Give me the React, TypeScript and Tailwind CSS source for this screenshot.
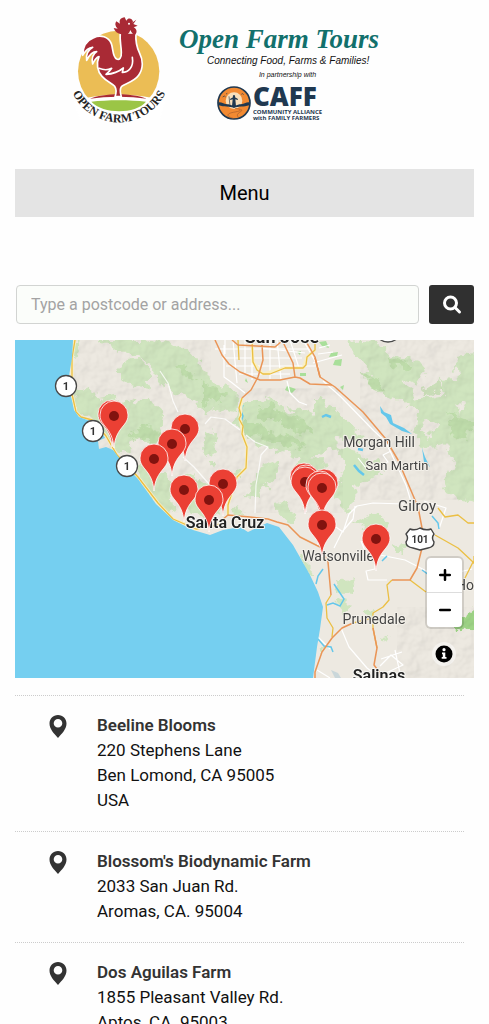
const pins = [
    { x: 97, y: 75 },
    { x: 99, y: 76 },
    { x: 170, y: 89 },
    { x: 157, y: 104 },
    { x: 139, y: 119 },
    { x: 208, y: 144 },
    { x: 169, y: 150 },
    { x: 194, y: 160 },
    { x: 289, y: 138 },
    { x: 291, y: 140 },
    { x: 290, y: 142 },
    { x: 309, y: 144 },
    { x: 305, y: 146 },
    { x: 307, y: 148 },
    { x: 307, y: 185 },
    { x: 361, y: 199 },
];

const shields = [
    { x: 51, y: 46 },
    { x: 78, y: 91 },
    { x: 112, y: 126 },
];

const places = [
    { name: "Morgan Hill", x: 364, y: 107, size: 14 },
    { name: "San Martin", x: 382, y: 130, size: 13 },
    { name: "Gilroy", x: 402, y: 171, size: 15 },
    { name: "Watsonville", x: 323, y: 221, size: 14 },
    { name: "Prunedale", x: 359, y: 284, size: 14 },
    { name: "Hollister", x: 467, y: 250, size: 14 },
];

const cities = [
    { name: "San Jose", x: 267, y: 3, size: 18 },
    { name: "Santa Cruz", x: 210, y: 188, size: 16 },
    { name: "Salinas", x: 364, y: 341, size: 16 },
];

const farms = [
    { name: "Beeline Blooms", lines: ["220 Stephens Lane", "Ben Lomond, CA 95005", "USA"] },
    { name: "Blossom's Biodynamic Farm", lines: ["2033 San Juan Rd.", "Aromas, CA. 95004"] },
    { name: "Dos Aguilas Farm", lines: ["1855 Pleasant Valley Rd.", "Aptos, CA. 95003"] },
];

function RoosterLogo() {
    return (
        <svg viewBox="27 30 306 330" className="w-[102px] h-[110px] shrink-0 overflow-visible" aria-hidden="true">
            <circle cx="176" cy="199" r="122" fill="#ebbd55" />
            <path d="M40 290C110 262 245 262 315 290L300 345H60Z" fill="#fff" />
            <path d="M94 290C140 284 212 284 258 290C226 328 130 328 94 290Z" fill="#9bc546" />
            <path d="M90 281C130 263 220 263 260 281C210 273 140 273 90 281Z" fill="#a92a35" />
            {/* Body, neck and tail */}
            <path
                d="M181 84C178 106 184 122 184 142C185 158 178 166 170 162C157 155 160 132 154 116C146 95 121 88 101 98C80 106 68 124 68 151C76 137 86 128 98 127C83 136 77 148 80 166C88 150 98 140 110 140C98 148 94 160 98 177C104 164 109 157 117 155C108 176 112 199 126 214C139 229 158 236 164 244C170 253 169 264 165 275H184C180 263 179 252 185 244C196 236 223 230 236 211C251 190 249 164 239 145C230 127 226 109 228 84Z"
                fill="#a92a35"
                stroke="#fff"
                strokeWidth="5"
                strokeLinejoin="round"
            />
            <path
                d="M184 88C173 86 164 79 161 69L173 71C165 64 164 55 169 49L180 56C176 46 182 38 194 37L199 47C205 37 216 40 219 50L215 54L229 44L220 57L233 62L221 67C232 72 232 84 224 91C216 86 213 79 211 75C207 88 197 95 184 88Z"
                fill="#a92a35"
            />
            <circle cx="207" cy="56" r="3" fill="#fff" />
            <path
                d="M117 190C134 197 149 193 155 190C149 199 144 203 138 208C157 207 177 200 190 189L187 202C204 202 222 188 217 157"
                fill="none"
                stroke="#fff"
                strokeWidth="5"
                strokeLinecap="round"
                strokeLinejoin="round"
            />
            <path id="logo-arc" d="M23 198A154 154 0 0 0 331 198" fill="none" />
            <text fill="#242424" className="font-['Liberation_Serif'] font-bold text-[36px]" textAnchor="middle">
                <textPath href="#logo-arc" startOffset="50%">
                    OPEN FARM TOURS
                </textPath>
            </text>
        </svg>
    );
}

function CaffLogo() {
    return (
        <svg viewBox="0 0 102 102" className="w-[34px] h-[34px] shrink-0" aria-hidden="true">
            <circle cx="51" cy="51" r="48" fill="#f28a32" stroke="#1f3850" strokeWidth="5" />
            <circle cx="51" cy="44" r="25" fill="#f8dfba" />
            <path d="M4 49C14 47 22 56 34 55L51 60L68 55C80 56 88 47 98 49L97 58C79 64 65 60 51 66C36 60 22 64 5 58Z" fill="#1f3850" />
            <path d="M45 61L47 40L40 42L39 39L48 34C45 25 57 25 54 34L63 39L62 42L55 40L57 61Z" fill="#1f3850" />
            <path d="M36 31L39 60M17 33L22 30L26 33M27 24L31 22M73 25L77 23L80 26" stroke="#1f3850" strokeWidth="2" fill="none" />
            <path d="M54 67C75 69 77 74 54 78C27 82 27 91 49 97M71 70C86 76 49 80 65 95" fill="none" stroke="#a65c2b" strokeWidth="2" />
        </svg>
    );
}

function FarmMap() {
    return (
        <svg
            viewBox="0 0 459 338"
            preserveAspectRatio="xMidYMid slice"
            className="block w-full h-full font-[Roboto,sans-serif]"
            role="img"
            aria-label="Map of farms"
        >
            <defs>
                <clipPath id="land">
                    <path d="M58 0L57 18L54 36L55 52L59 70L64 77L75 81L86 91L90 98L83 101L84 109L91 107L98 110L108 123L123 139L141 164L158 180L178 190L195 195L208 190L225 187L233 192L252 183L264 187L278 205L295 235L303 252L308 267L305 289L302 307L298 338H459V0Z" />
                </clipPath>
                {/* Hill shading */}
                <filter id="relief" x="0" y="0" width="100%" height="100%">
                    <feTurbulence type="fractalNoise" baseFrequency="0.06" numOctaves="3" seed="8" />
                    <feDiffuseLighting surfaceScale="4" lightingColor="#ffffff">
                        <feDistantLight azimuth="225" elevation="60" />
                    </feDiffuseLighting>
                </filter>
                {/* Ragged forest edges */}
                <filter id="ragged" x="0" y="0" width="100%" height="100%">
                    <feTurbulence type="fractalNoise" baseFrequency="0.11" numOctaves="3" seed="4" result="noise" />
                    <feDisplacementMap in="SourceGraphic" in2="noise" scale="14" xChannelSelector="R" yChannelSelector="G" />
                </filter>
            </defs>
            <rect width="459" height="338" fill="#75cff0" />
            <g clipPath="url(#land)">
                <rect width="459" height="338" fill="#ede9e1" />
                <g filter="url(#ragged)">
                    <g fill="#d0e5bf">
                        <path d="M57 0H65L63 12L60 18L55 14Z" />
                        <path d="M57 55L72 48L85 57L98 55L112 65L128 57L142 62L152 75L148 88L138 105L128 98L118 98L112 112L98 110L83 82L75 80L62 72Z" />
                        <path d="M104 29L113 20L125 18L138 35L132 48L115 45L104 36Z" />
                        <path d="M80 0H126L150 8L145 20L160 42L147 50L138 28L120 13L105 14L94 5Z" />
                        <path d="M145 0L162 5L178 15L188 27L195 40L222 52L220 72L202 68L191 75L177 58L160 54L150 38L136 26Z" />
                        <path d="M228 62L252 58L272 67L288 68L305 77L320 92L324 108L305 112L288 122L272 112L242 105L226 88L218 84L220 76Z" />
                        <path d="M190 92L202 91L200 112L192 117L188 108ZM194 122H201L199 128L193 127ZM219 131L231 128L223 138L212 137Z" />
                        <path d="M245 128L265 122L259 140L248 149L242 159L230 158L233 150ZM282 118L310 117L309 137L297 137L290 128L280 128Z" />
                        <path d="M333 0L363 2L377 15L407 22L410 32L402 45L388 40L400 60L430 55L425 40L442 39L440 15L470 12V165L447 160L427 150L440 118L427 105L409 108L397 92L407 75L390 62L367 55L350 42L355 32L340 15Z" />
                        <path d="M300 58L320 67L343 92L350 99L343 104L323 98L300 85Z" />
                        <path d="M323 108L343 112L350 122L363 118L367 132L343 145L325 142L330 128ZM318 146L335 139L341 154L334 173L322 161Z" />
                        <path d="M120 123L142 130L155 142L160 170L151 174L137 159L126 140ZM170 133L185 138L202 151L209 173L192 179L174 169L160 156Z" />
                        <path d="M217 170L224 165L227 174L219 177ZM260 164L272 162L280 177L275 184L266 176ZM284 214L289 218L299 237L294 239Z" />
                        <path d="M323 242L329 239L342 245L340 254L328 253L319 248ZM349 272L358 268L357 278L350 279ZM322 258L333 260L330 273L321 270ZM302 307L309 304L304 316ZM368 297L374 296L372 302Z" />
                        <path d="M340 180L363 174L373 183L368 190L352 195ZM375 203L389 205L391 213L381 215Z" />
                    </g>
                    <g fill="#b4d99e" opacity="0.6">
                        <path d="M115 92L132 85L145 93L140 107L133 98L118 102ZM158 23L174 28L181 40L168 36Z" />
                        <path d="M188 43L211 53L205 62L195 57L188 67ZM228 83L243 83L254 92L284 98L290 110L266 104L250 101L242 93L230 96Z" />
                        <path d="M374 17L399 24L390 29L378 26ZM346 31L363 40L371 53L354 44ZM433 72L457 82L451 101L438 94ZM407 48L424 43L430 51L410 57Z" />
                        <path d="M240 68L256 64L270 78L289 80L296 92L277 90L260 80L246 80Z" />
                    </g>
                    <path d="M443 279L462 268V285L447 292L435 284Z" fill="#9fd587" />
                    {/* Clearings */}
                    <path d="M92 62L100 66L97 74L90 70ZM375 64L386 70L380 76ZM270 62L279 72L270 74ZM410 78L421 86L414 97L405 90ZM440 60L448 66L444 74Z" fill="#ede9e1" />
                </g>
                <g fill="#a9df9a">
                    <path d="M304 2L311 1L314 8L307 6ZM316 13L323 12L322 16L314 17ZM320 20L327 19L326 26L318 25ZM272 46L281 49L277 53L270 50ZM285 33H291V36H285ZM231 38L233 43L230 41ZM282 12L286 11L285 15ZM325 47L329 45L328 50Z" />
                </g>
                <g className="mix-blend-multiply" opacity="0.2">
                    <rect x="54" y="48" width="274" height="125" filter="url(#relief)" />
                    <rect x="54" y="0" width="142" height="48" filter="url(#relief)" />
                    <rect x="345" y="0" width="114" height="160" filter="url(#relief)" />
                    <rect x="382" y="267" width="77" height="71" filter="url(#relief)" />
                </g>
                {/* City grid and small roads */}
                <g fill="none" stroke="#fff" strokeWidth="1.2" strokeLinejoin="round">
                    <path d="M209 5V37L216 42L230 53M210 0V14M218 0L222 43M230 0V33M237 4V40M255 0V39M262 0L266 40M200 9H296M207 18H287M211 26H301M224 34H275M275 0L284 28M288 0L304 28" />
                    <path d="M272 41L275 53L284 62L292 65M308 41L326 57L359 91L370 101L376 113L391 145L397 165M376 111L368 115L373 122L351 128L343 118M246 8L290 13M298 23L327 15M304 8L315 5M303 14L318 12" />
                    <path d="M231 95L240 102L253 107L246 115L244 128L241 145L240 173M168 117L179 127L194 144M145 31L153 43L158 61L163 72M162 94L154 107M190 84L196 77L210 79L225 90" opacity="0.8" />
                    <path d="M302 205L318 185L328 192L334 174L342 166L358 163L389 164M340 166L338 179L327 192L319 208M365 215L390 220L423 237L457 229M360 221V229L351 231L353 240L372 240M326 288L334 307L352 328L365 338M346 201L353 218" />
                    <path d="M365 326L376 315L388 325L371 333L381 338M366 319L387 312M380 310L386 338M302 330L315 338M302 296L315 309M424 189L431 168L409 161" />
                </g>
                <g fill="none" stroke="#64c7eb" strokeWidth="1.5">
                    <path d="M228 65L226 71L228 76L226 82M308 229L303 236L301 244M312 265L318 263L325 266L329 259L323 250L319 244M303 299L309 306L316 307L318 312M417 176L423 183L424 189M367 221L372 216M407 230L414 235" />
                    <path d="M307 77L311 75L316 77M339 125L344 131L349 135M343 109L348 110" strokeWidth="2.5" />
                </g>
                <path d="M365 66L369 72L376 75L378 83L389 88L397 94L387 91L375 84L371 77L366 73ZM407 108L410 117L415 127L409 122Z" fill="#64c7eb" />
                <path d="M316 330L323 333L326 338H320Z" fill="#cad7da" />
                {/* Highways */}
                <g fill="none" stroke="#f9efc5" strokeWidth="3" strokeLinejoin="round">
                    <path d="M60 0L57 18L57 34L57 54L61 72L66 77L77 80L91 96L102 115L123 137L143 163L158 179L181 189L207 184" />
                    <path d="M237 0L238 22L248 34L270 28L288 28L292 17L300 10M227 58L225 78L228 95L232 107L231 128L222 137L213 165V175" />
                </g>
                <g fill="none" stroke="#ebbf43" strokeWidth="1.3" strokeLinejoin="round">
                    <path d="M60 0L57 18L57 34L57 54L61 72L66 77L77 80L91 96L102 115L123 137L143 163L158 179L181 189L207 184" />
                    <path d="M237 0L238 22L242 30L248 34L255 34L270 28L288 28L291 25L292 17L300 10V0M223 0L224 20" />
                    <path d="M227 58L224 68L226 75L224 79L228 86L227 94L232 107L231 128L222 137L213 165V175" />
                    <path d="M423 168L430 177L443 175L453 183H460M420 195L443 208L458 222L448 242M459 216V224M395 240L411 252M358 278L338 283M316 255L311 263L312 278L318 288L317 297" />
                    <path d="M377 240L372 245L374 260L368 267L358 273V288L362 308" />
                </g>
                <g fill="none" stroke="#ea9557" strokeWidth="1.5" strokeLinejoin="round">
                    <path d="M200 0L207 15L214 24L225 32L245 40H265L280 37L285 38L295 44L317 45M217 0L223 5L260 7L267 1M247 5L248 20L243 37L236 50L227 58M268 2L278 23L280 37M292 3L300 17L305 37" />
                    <path d="M300 18L305 37L320 47L348 72L370 98L383 120L403 167L407 188V208L402 228L395 240H377" />
                    <path d="M207 180L213 175L235 177L253 179L262 182L273 185L285 197L305 207L313 222L316 255M338 283L327 288L317 298L307 312L300 332V338M358 288L362 308L359 325L368 337" />
                </g>
            </g>
            {/* Place names */}
            <g textAnchor="middle" fill="#444" stroke="#f3f0e9" strokeWidth="2" strokeLinejoin="round" className="[paint-order:stroke]">
                {places.map((p) => (
                    <text key={p.name} x={p.x} y={p.y} fontSize={p.size}>
                        {p.name}
                    </text>
                ))}
            </g>
            <g textAnchor="middle" fill="#222" stroke="#f7f7f4" strokeWidth="2" strokeLinejoin="round" className="font-semibold [paint-order:stroke]">
                {cities.map((c) => (
                    <text key={c.name} x={c.x} y={c.y} fontSize={c.size}>
                        {c.name}
                    </text>
                ))}
            </g>
            {/* Road shields */}
            {shields.map((s) => (
                <g key={s.x}>
                    <circle cx={s.x} cy={s.y} r="10.5" fill="#fff" stroke="#484848" strokeWidth="1.3" />
                    <text x={s.x} y={s.y + 4} textAnchor="middle" fontSize="11" className="font-bold" fill="#333">
                        1
                    </text>
                </g>
            ))}
            <ellipse cx="373" cy="-8" rx="12" ry="10" fill="#fff" stroke="#484848" strokeWidth="1.3" />
            <path
                d="M395 189Q400 191 405 188Q411 191 416 189L419 194Q416 198 419 202Q419 207 413 208L405 210L398 208Q391 207 391 202Q394 198 391 194Z"
                fill="#fff"
                stroke="#444"
                strokeWidth="1.4"
                strokeLinejoin="round"
            />
            <text x="405" y="203" textAnchor="middle" fontSize="10" className="font-bold" fill="#333">
                101
            </text>
            {pins.map((p, i) => (
                <g key={i} transform={`translate(${p.x} ${p.y})`}>
                    <path
                        d="M0 32C-1 21-4 16-10 9C-13 5-14 3-14-1A14 14 0 0 1 14-1C14 3 13 5 10 9C4 16 1 21 0 32Z"
                        fill="#eb4034"
                        stroke="#fff"
                        strokeWidth="0.8"
                    />
                    <circle r="5" fill="#81130f" />
                </g>
            ))}
        </svg>
    );
}

function MarkerIcon() {
    return (
        <svg viewBox="0 0 18 23" className="w-[18px] h-[23px] mt-[2px] shrink-0" aria-hidden="true">
            <path
                fill="#333"
                fillRule="evenodd"
                d="M9 0C4 0 .5 3.8.5 8.5C.5 14 5 18.5 9 23C13 18.5 17.5 14 17.5 8.5C17.5 3.8 14 0 9 0ZM9 4A4.3 4.3 0 1 0 9 12.6A4.3 4.3 0 0 0 9 4Z"
            />
        </svg>
    );
}

export default function App() {
    return (
        <div className="h-screen overflow-hidden bg-[#fefefe] px-[15px] font-[Roboto,sans-serif] text-[#111]">
            <header className="h-[169px] pt-[15px]">
                <a href="#" className="flex justify-center gap-2 pr-10">
                    <RoosterLogo />
                    <div className="w-[201px] pt-[10px] whitespace-nowrap">
                        <div className="font-['Liberation_Serif'] font-bold italic text-[27px] leading-7 text-[#12706c]">
                            Open Farm Tours
                        </div>
                        <div className="pl-7 font-['Liberation_Sans'] italic text-[10px] leading-4">
                            Connecting Food, Farms &amp; Families!
                        </div>
                        <div className="pl-4 text-center font-['Liberation_Sans'] italic text-[7px] leading-3">
                            In partnership with
                        </div>
                        <div className="flex justify-center gap-[2px] pt-[5px] pr-5 text-[#1f3850] font-['Open_Sans'] font-bold">
                            <CaffLogo />
                            <div>
                                <div className="text-[26px] leading-[21px] font-extrabold">CAFF</div>
                                <div className="pt-[2px] text-[6px] leading-[6px]">COMMUNITY ALLIANCE</div>
                                <div className="text-[6px] leading-[7px]">with FAMILY FARMERS</div>
                            </div>
                        </div>
                    </div>
                </a>
            </header>

            <button className="block w-full h-12 bg-[#e4e4e4] text-xl text-black">Menu</button>

            <form className="flex gap-[10px] mt-[68px] pl-px">
                <input
                    type="text"
                    aria-label="Postcode or address"
                    placeholder="Type a postcode or address..."
                    className="flex-1 min-w-0 h-[39px] px-[14px] rounded-[4px] border border-[#d2d4d2] bg-[#fbfdfa] text-base placeholder:text-[#a3a3a3]"
                />
                <button type="button" aria-label="Search" className="w-[45px] h-[39px] flex items-center justify-center rounded-[3px] bg-[#303030]">
                    <svg viewBox="0 0 20 20" className="w-5 h-5" fill="none" stroke="#fff" strokeWidth="3">
                        <circle cx="8.5" cy="8" r="6" />
                        <path d="M13 12.5L17.5 17" strokeLinecap="round" />
                    </svg>
                </button>
            </form>

            <section className="relative mt-4 h-[338px] overflow-hidden">
                <FarmMap />
                <div className="absolute right-3 bottom-[51px] w-[35px] rounded-[4px] bg-white shadow-[0_0_0_2px_rgba(0,0,0,0.12)]">
                    <button aria-label="Zoom in" className="flex w-full h-[35px] items-center justify-center border-b border-[#ddd]">
                        <svg viewBox="0 0 12 12" className="w-3 h-3" stroke="#000" strokeWidth="2.5" strokeLinecap="round">
                            <path d="M6 1.2V10.8M1.2 6H10.8" />
                        </svg>
                    </button>
                    <button aria-label="Zoom out" className="flex w-full h-[34px] items-center justify-center">
                        <svg viewBox="0 0 12 12" className="w-3 h-3" stroke="#000" strokeWidth="2.5" strokeLinecap="round">
                            <path d="M1.2 6H10.8" />
                        </svg>
                    </button>
                </div>
                <button
                    aria-label="Map information"
                    className="absolute right-[18px] bottom-3 w-6 h-6 flex items-center justify-center rounded-full bg-white/50"
                >
                    <svg viewBox="0 0 18 18" className="w-[18px] h-[18px]">
                        <circle cx="9" cy="9" r="8.5" fill="#000" />
                        <circle cx="9" cy="4.7" r="1.6" fill="#fff" />
                        <path d="M7 7.5H10.3V12H11.5V13.8H6.7V12H7.8V9.3H7Z" fill="#fff" />
                    </svg>
                </button>
            </section>

            <ul className="mt-[17px] mr-[10px]">
                {farms.map((farm) => (
                    <li key={farm.name} className="flex gap-[30px] border-t border-dotted border-[#ccc] pt-[17px] pb-[18px] pl-[34px] text-[17px] leading-[25px]">
                        <MarkerIcon />
                        <div>
                            <h3 className="font-semibold text-[#333]">{farm.name}</h3>
                            {farm.lines.map((line) => (
                                <p key={line}>{line}</p>
                            ))}
                        </div>
                    </li>
                ))}
            </ul>
        </div>
    );
}
